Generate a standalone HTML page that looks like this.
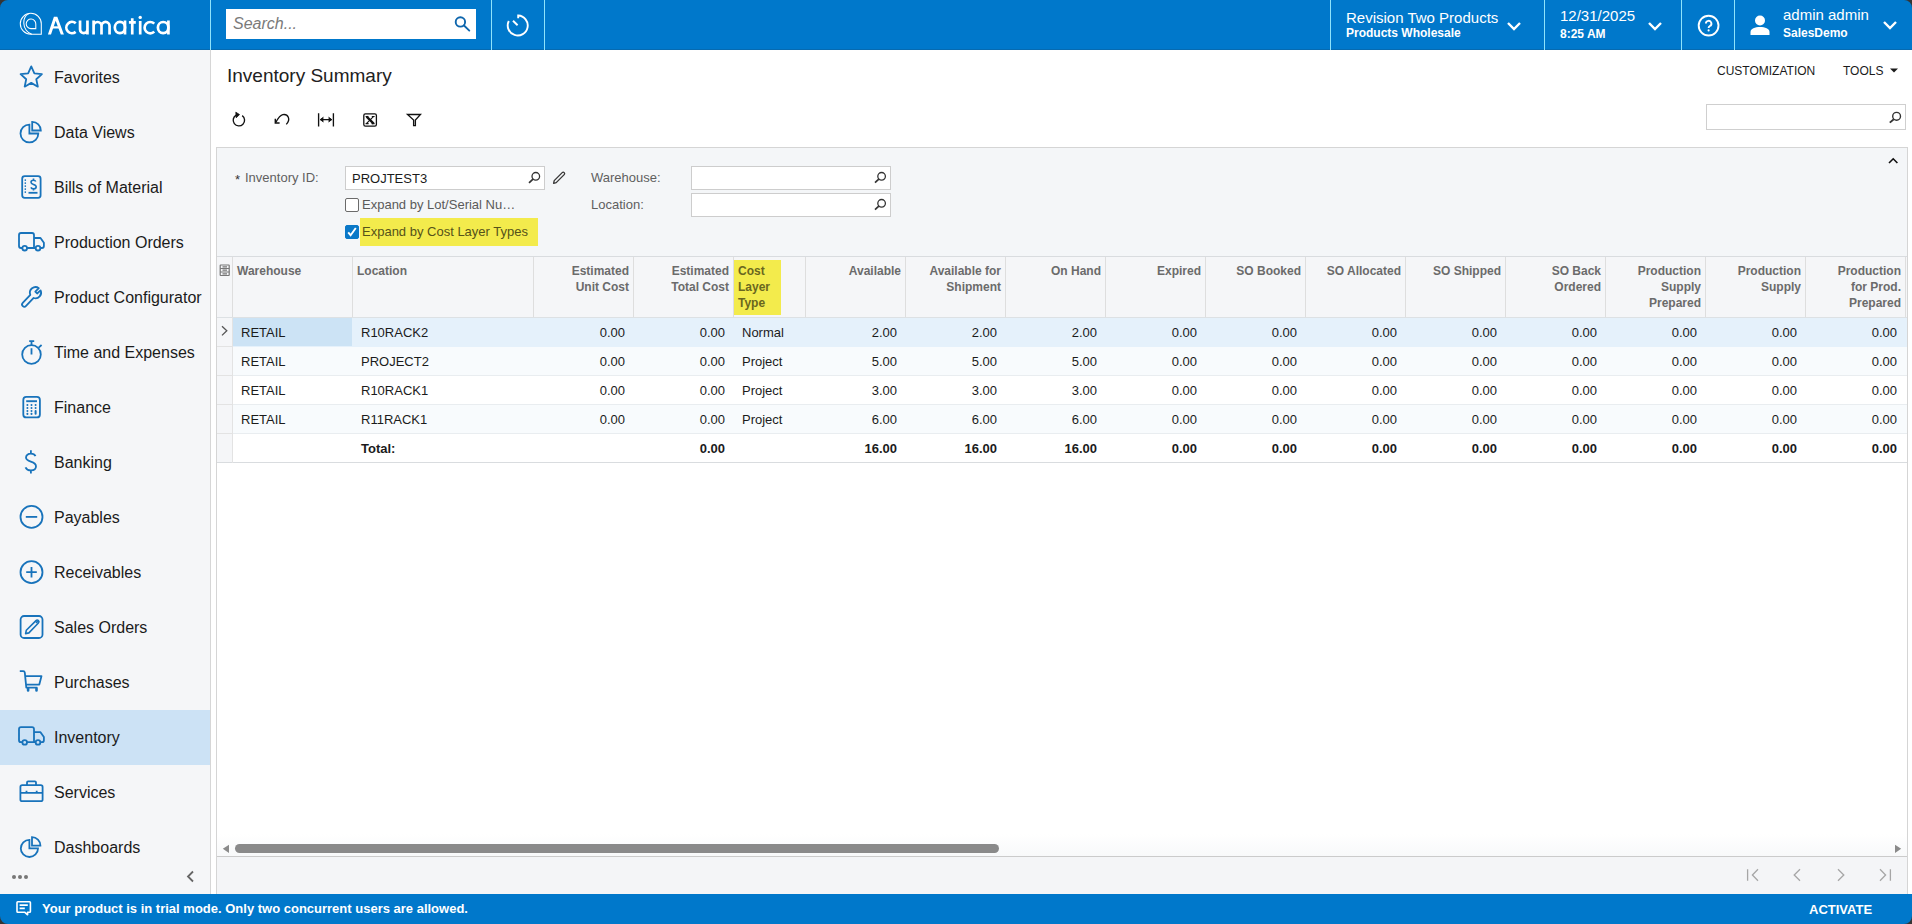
<!DOCTYPE html>
<html><head><meta charset="utf-8">
<style>
*{box-sizing:border-box;margin:0;padding:0}
html,body{width:1912px;height:924px;overflow:hidden;background:#fff;font-family:"Liberation Sans",sans-serif;color:#1b1b1b}
.abs{position:absolute}
#hdr{position:absolute;left:0;top:0;width:1912px;height:50px;background:#0078cb}
.vdiv{position:absolute;top:0;width:1px;height:50px;background:#8fe3fb}
.wt{color:#fff;position:absolute;white-space:nowrap}
#side{position:absolute;left:0;top:50px;width:210px;height:844px;background:#f5f6f8}
#sideb{position:absolute;left:210px;top:50px;width:1px;height:844px;background:#d6d6d6}
.nav{position:absolute;left:0;width:210px;height:55px}
.nav .ic{position:absolute;left:19px;top:15px;width:25px;height:25px}
.nav .tx{position:absolute;left:54px;top:19px;font-size:16px;line-height:18px;color:#1b1b1b;white-space:nowrap}
.nav.sel{background:#cce2f5}
#foot{position:absolute;left:0;top:894px;width:1912px;height:30px;background:#0078cb}
.lbl{font-size:13px;line-height:15px;color:#5f5f5f;white-space:nowrap}
.inp{background:#fff;border:1px solid #cdcdcd}
.cb{width:14px;height:14px;border:1px solid #6b6b6b;border-radius:2px;background:#fff}
.cb.on{background:#0a78c8;border-color:#0a78c8}
.cb.on svg{position:absolute;left:-1px;top:-1px}
.hd{font-size:12px;line-height:14px;font-weight:bold;color:#6b6b6b;white-space:nowrap}
.cell{font-size:13px;line-height:15px;color:#1b1b1b;white-space:nowrap}
.cell.b{font-weight:bold}
</style></head><body>
<div id="hdr">
  <div class="abs" style="left:0;top:49px;width:1912px;height:1px;background:#066ab0"></div>
  <div class="vdiv" style="left:210px"></div>
  <div class="vdiv" style="left:491px"></div>
  <div class="vdiv" style="left:544px"></div>
  <div class="vdiv" style="left:1330px"></div>
  <div class="vdiv" style="left:1544px"></div>
  <div class="vdiv" style="left:1681px"></div>
  <div class="vdiv" style="left:1734px"></div>

  <!-- logo -->
  <svg class="abs" style="left:0;top:0" width="50" height="50" viewBox="0 0 50 50" fill="none" stroke="#fff" stroke-width="1.05">
    <path d="M41.3 34.3V23.8A10.5 10.5 0 1 0 30.8 34.3Z"/>
    <path d="M28.8 13.6C25.2 15.3 23.6 19 23.8 23.2C24 28.6 27.4 33 31.8 34.3"/>
    <path d="M35.8 28.6V24A4.8 4.8 0 1 0 31 28.6Z"/>
  </svg>
  <svg class="abs" style="left:40px;top:10px" width="140" height="30" viewBox="40 10 140 30" fill="none" stroke="#fff" stroke-width="2.7">
    <path d="M75.78 23.35A5.65 5.65 0 1 0 75.63 31.88M80.05 20.6V29.4A3.7 3.7 0 0 0 87.45 29.4M87.45 20.6V34.4M93.6 34.4V20.6M93.6 25.95A3.95 3.95 0 0 1 101.5 25.95V34.4M101.5 25.95A4.02 4.02 0 0 1 109.55 25.95V34.4M125 20.6V34.4M132.25 18.2V34.4M128.9 22.35H135.8M140.2 21V34.4M154.25 23.65A5.65 5.65 0 1 0 154.25 31.65M168.4 20.6V34.4"/>
    <path d="M47.9 34.4L53.9 16.8H57.3L63.9 34.4H60.8L55.67 20.71L51 34.4Z" fill="#fff" stroke="none"/><rect x="52.6" y="26.3" width="7" height="2.2" fill="#fff" stroke="none"/>
    <ellipse cx="119.9" cy="27.55" rx="5.1" ry="5.6"/>
    <ellipse cx="163.15" cy="27.6" rx="5.25" ry="5.6"/>
    <circle cx="140.2" cy="17.4" r="1.7" fill="#fff" stroke="none"/>
  </svg>
  <!-- search -->
  <div class="abs" style="left:226px;top:9px;width:250px;height:30px;background:#fff"></div>
  <div class="abs" style="left:233px;top:14px;font-size:16px;line-height:20px;font-style:italic;color:#7a7a7a">Search...</div>
  <svg class="abs" style="left:450px;top:12px" width="24" height="24" viewBox="450 12 24 24" fill="none" stroke="#0e66ad" stroke-width="1.9">
    <circle cx="460.4" cy="21.9" r="4.7"/><path d="M464 25.5L469.3 30.6" stroke-linecap="round"/>
  </svg>
  <!-- history -->
  <svg class="abs" style="left:500px;top:8px" width="36" height="36" viewBox="500 8 36 36" fill="none" stroke="#fff" stroke-width="1.9">
    <path d="M508.8 21A10 10 0 1 0 518.2 15.5V18.3"/><path d="M513 20.8L517.6 25.3"/>
  </svg>
  <!-- branch -->
  <div class="wt" style="left:1346px;top:9px;font-size:15px;line-height:17px">Revision Two Products</div>
  <div class="wt" style="left:1346px;top:26px;font-size:12px;line-height:14px;font-weight:bold">Products Wholesale</div>
  <svg class="abs" style="left:1506px;top:20px" width="16" height="12" viewBox="0 0 16 12" fill="none" stroke="#fff" stroke-width="2.4"><path d="M2 3L8 9L14 3"/></svg>
  <!-- date -->
  <div class="wt" style="left:1560px;top:7px;font-size:15px;line-height:17px">12/31/2025</div>
  <div class="wt" style="left:1560px;top:27px;font-size:12px;line-height:14px;font-weight:bold">8:25 AM</div>
  <svg class="abs" style="left:1647px;top:20px" width="16" height="12" viewBox="0 0 16 12" fill="none" stroke="#fff" stroke-width="2.4"><path d="M2 3L8 9L14 3"/></svg>
  <!-- help -->
  <svg class="abs" style="left:1690px;top:8px" width="36" height="36" viewBox="1690 8 36 36" fill="none" stroke="#fff" stroke-width="1.9">
    <circle cx="1708.6" cy="25.6" r="9.9"/>
    <path d="M1705.9 23.6A2.75 2.75 0 1 1 1709.9 26C1709 26.5 1708.6 27 1708.6 28"/>
    <circle cx="1708.6" cy="30.4" r="1.05" fill="#fff" stroke="none"/>
  </svg>
  <!-- user -->
  <svg class="abs" style="left:1750px;top:15px" width="20" height="20" viewBox="0 0 20 20" fill="#fff">
    <circle cx="10" cy="5.5" r="5"/><path d="M0.5 20V17C0.5 13.5 5 12 10 12S19.5 13.5 19.5 17V20Z"/>
  </svg>
  <div class="wt" style="left:1783px;top:6px;font-size:15px;line-height:17px">admin admin</div>
  <div class="wt" style="left:1783px;top:26px;font-size:12px;line-height:14px;font-weight:bold">SalesDemo</div>
  <svg class="abs" style="left:1882px;top:19px" width="16" height="12" viewBox="0 0 16 12" fill="none" stroke="#fff" stroke-width="2.4"><path d="M2 3L8 9L14 3"/></svg>
</div>
<div id="side"></div>
<div class="nav" style="top:50px"><svg class="abs" style="left:0;top:0" width="50" height="55" viewBox="0 0 50 55" fill="none" stroke="#1873bb" stroke-width="1.8"><polygon points="31.25,16.40 34.37,23.31 41.90,24.14 36.29,29.24 37.83,36.66 31.25,32.90 24.67,36.66 26.21,29.24 20.60,24.14 28.13,23.31" stroke-linejoin="round"/></svg><div class="tx">Favorites</div></div>
<div class="nav" style="top:105px"><svg class="abs" style="left:0;top:0" width="50" height="55" viewBox="0 0 50 55" fill="none" stroke="#1873bb" stroke-width="1.8"><path d="M29.4 19.6A8.9 8.9 0 1 0 38.3 28.5H29.4Z"/><path d="M32.2 16.9A8.6 8.6 0 0 1 40.8 25.5H32.2Z"/></svg><div class="tx">Data Views</div></div>
<div class="nav" style="top:160px"><svg class="abs" style="left:0;top:0" width="50" height="55" viewBox="0 0 50 55" fill="none" stroke="#1873bb" stroke-width="1.8"><rect x="22.2" y="16.2" width="18.4" height="21.6" rx="2.5"/><path d="M25.3 20v0.1M25.3 23v0.1M25.3 26v0.1M25.3 29v0.1M25.3 32v0.1" stroke-width="1.7" stroke-linecap="round"/><path d="M28.5 32.8H37.5"/><path d="M35.8 21.5C35.3 20.5 34.5 20.2 33.5 20.2C32 20.2 31 20.9 31 22.2C31 25 36.2 23.8 36.2 26.8C36.2 28.2 35 28.9 33.5 28.9C32.3 28.9 31.3 28.4 30.9 27.4M33.5 18.6V20.2M33.5 28.9V30.6" stroke-width="1.6"/></svg><div class="tx">Bills of Material</div></div>
<div class="nav" style="top:215px"><svg class="abs" style="left:0;top:0" width="50" height="55" viewBox="0 0 50 55" fill="none" stroke="#1873bb" stroke-width="1.8"><path d="M22.5 33H21Q19 33 19 31V20Q19 18 21 18H32Q34 18 34 20V33M27 33H35.8M34 23H40.5L43.9 27.8V31Q43.9 33 41.9 33H40.2" stroke-linejoin="round"/><circle cx="24.7" cy="33.2" r="2.3"/><circle cx="38" cy="33.2" r="2.3"/></svg><div class="tx">Production Orders</div></div>
<div class="nav" style="top:270px"><svg class="abs" style="left:0;top:0" width="50" height="55" viewBox="0 0 50 55" fill="none" stroke="#1873bb" stroke-width="1.8"><path d="M22.73 32.8L30.32 24.8A5.6 5.6 0 0 1 38.82 18.19L35.3 21.6L37.1 23.5L40.58 20.33A5.6 5.6 0 0 1 33.66 27.99L26.07 35.98A2.3 2.3 0 0 1 22.73 32.8Z" stroke-linejoin="round"/></svg><div class="tx">Product Configurator</div></div>
<div class="nav" style="top:325px"><svg class="abs" style="left:0;top:0" width="50" height="55" viewBox="0 0 50 55" fill="none" stroke="#1873bb" stroke-width="1.8"><circle cx="31.5" cy="29.5" r="9.3"/><path d="M31.5 23.2V29.6M31.5 16.5V20.2M29.2 16.2H34.2M38.6 22.6L41.6 20"/></svg><div class="tx">Time and Expenses</div></div>
<div class="nav" style="top:380px"><svg class="abs" style="left:0;top:0" width="50" height="55" viewBox="0 0 50 55" fill="none" stroke="#1873bb" stroke-width="1.8"><rect x="23.3" y="16.9" width="16.6" height="20.5" rx="3"/><path d="M26.2 21.2H37" stroke-width="1.9"/><path d="M27.4 24.9v.1M31.5 24.9v.1M35.6 24.9v.1M27.4 27.9v.1M31.5 27.9v.1M35.6 27.9v.1M27.4 30.9v.1M31.5 30.9v.1M35.6 30.9V33.8M27.4 33.8v.1M31.5 33.8v.1" stroke-width="2" stroke-linecap="round"/></svg><div class="tx">Finance</div></div>
<div class="nav" style="top:435px"><svg class="abs" style="left:0;top:0" width="50" height="55" viewBox="0 0 50 55" fill="none" stroke="#1873bb" stroke-width="1.8"><path d="M35.5 21.2C34.8 19.6 33.3 18.7 30.9 18.7C28.1 18.7 26 20 26 22.5C26 27.8 36 25.5 36 31.3C36 34 33.9 35.4 30.9 35.4C28.3 35.4 26.4 34.3 25.5 32.3M30.9 15.2V18.7M30.9 35.4V38.5" stroke-width="1.8"/></svg><div class="tx">Banking</div></div>
<div class="nav" style="top:490px"><svg class="abs" style="left:0;top:0" width="50" height="55" viewBox="0 0 50 55" fill="none" stroke="#1873bb" stroke-width="1.8"><circle cx="31.5" cy="26.9" r="11"/><path d="M25.8 26.9H37.2"/></svg><div class="tx">Payables</div></div>
<div class="nav" style="top:545px"><svg class="abs" style="left:0;top:0" width="50" height="55" viewBox="0 0 50 55" fill="none" stroke="#1873bb" stroke-width="1.8"><circle cx="31.5" cy="27.2" r="11"/><path d="M26.2 27.2H36.8M31.5 21.9V32.5"/></svg><div class="tx">Receivables</div></div>
<div class="nav" style="top:600px"><svg class="abs" style="left:0;top:0" width="50" height="55" viewBox="0 0 50 55" fill="none" stroke="#1873bb" stroke-width="1.8"><rect x="20.6" y="16" width="21.9" height="22" rx="3.5"/><path d="M25.6 33.6L26.3 30.3L36 20.6Q37.2 19.4 38.4 20.6Q39.6 21.8 38.4 23L28.9 32.9Z" stroke-linejoin="round" stroke-width="1.6"/><path d="M36.3 21.4L37.6 22.7" stroke-width="2.6"/></svg><div class="tx">Sales Orders</div></div>
<div class="nav" style="top:655px"><svg class="abs" style="left:0;top:0" width="50" height="55" viewBox="0 0 50 55" fill="none" stroke="#1873bb" stroke-width="1.8"><path d="M19.8 16.2H23.2Q24.6 16.2 24.8 17.6L26.3 32.7H37.3M25.2 21.1H41.5L39.3 29.6H26.1" stroke-linejoin="round"/><path d="M28.1 33.4V35.4M36.5 33.4V35.4" stroke-width="2.6" stroke-linecap="round"/></svg><div class="tx">Purchases</div></div>
<div class="nav sel" style="top:710px"><svg class="abs" style="left:0;top:0" width="50" height="55" viewBox="0 0 50 55" fill="none" stroke="#1873bb" stroke-width="1.8"><path d="M22.5 32.2H21Q19 32.2 19 30.2V19.2Q19 17.2 21 17.2H32Q34 17.2 34 19.2V32.2M27 32.2H35.8M34 22.2H40.5L43.9 27V30.2Q43.9 32.2 41.9 32.2H40.2" stroke-linejoin="round"/><circle cx="24.7" cy="32.4" r="2.3"/><circle cx="38" cy="32.4" r="2.3"/></svg><div class="tx">Inventory</div></div>
<div class="nav" style="top:765px"><svg class="abs" style="left:0;top:0" width="50" height="55" viewBox="0 0 50 55" fill="none" stroke="#1873bb" stroke-width="1.8"><rect x="20.4" y="20.2" width="22.2" height="16" rx="1.8"/><path d="M27 20.2V17.5C27 16.8 27.4 16.4 28.1 16.4H34.9C35.6 16.4 36 16.8 36 17.5V20.2M20.4 27.8H42.6M26.5 25.8V27.8M36.7 25.8V27.8"/></svg><div class="tx">Services</div></div>
<div class="nav" style="top:820px"><svg class="abs" style="left:0;top:0" width="50" height="55" viewBox="0 0 50 55" fill="none" stroke="#1873bb" stroke-width="1.8"><path d="M29.4 19.8A8.6 8.6 0 1 0 38 28.4H29.4Z"/><path d="M32 17.2A8.4 8.4 0 0 1 40.4 25.6H32Z"/></svg><div class="tx">Dashboards</div></div>
<div class="abs" style="left:12px;top:875px;width:4px;height:4px;border-radius:2px;background:#777"></div>
<div class="abs" style="left:18px;top:875px;width:4px;height:4px;border-radius:2px;background:#777"></div>
<div class="abs" style="left:24px;top:875px;width:4px;height:4px;border-radius:2px;background:#777"></div>
<svg class="abs" style="left:184px;top:869px" width="12" height="15" viewBox="0 0 12 15" fill="none" stroke="#666" stroke-width="1.8"><path d="M9 2.5L4 7.5L9 12.5"/></svg>

<div id="sideb"></div>

<!-- MAIN -->
<div class="abs" style="left:227px;top:65px;font-size:19px;line-height:22px;color:#212121;white-space:nowrap">Inventory Summary</div>
<div class="abs" style="left:1717px;top:64px;font-size:12px;line-height:14px;color:#1b1b1b;white-space:nowrap">CUSTOMIZATION</div>
<div class="abs" style="left:1843px;top:64px;font-size:12px;line-height:14px;color:#1b1b1b;white-space:nowrap">TOOLS</div>
<svg class="abs" style="left:1889px;top:67px" width="10" height="7" viewBox="0 0 10 7"><path d="M1 1.5H9L5 5.5Z" fill="#1b1b1b"/></svg>
<!-- toolbar icons -->
<svg class="abs" style="left:220px;top:100px" width="220" height="40" viewBox="220 100 220 40" fill="none" stroke="#111" stroke-width="1.35">
  <path d="M242.2 115.6A5.7 5.7 0 1 1 236.2 115.2"/>
  <path d="M235.8 112.2L239.5 114.6L236.2 117.8Z" fill="#111" stroke-width="0.8" stroke-linejoin="round"/>
  <path d="M286.3 124.4C288.5 122 289.3 119.5 288.3 117.3C287.3 115 285 114.2 282.8 114.6C280.6 115 279 116.5 275.8 122.3"/>
  <path d="M275.3 118.8V123H279.6" stroke-width="1.4"/>
  <path d="M318.6 113.2V126.6M333.4 113.2V126.6M320.5 119.6H331.5"/>
  <path d="M323.4 117.2L320.2 119.6L323.4 122M328.6 117.2L331.8 119.6L328.6 122" fill="#111" stroke-width="0.9"/>
  <rect x="363.8" y="113.8" width="12.6" height="12.4" rx="1.6" stroke-width="1.3"/>
  <path d="M366.6 116.6L373.6 123.6" stroke-width="2.3"/>
  <path d="M373.4 116.6L366.6 123.4" stroke-width="1.1"/>
  <path d="M365.6 116.5H368.4M371.8 116.5H374.6M365.6 123.6H368.6M371.6 123.6H374.6" stroke-width="1.1"/>
  <path d="M407.5 114.5H420.5L415.4 120V125.6H413.6V120Z" stroke-width="1.3" stroke-linejoin="miter"/>
</svg>
<!-- grid search -->
<div class="abs" style="left:1706px;top:104px;width:200px;height:26px;background:#fff;border:1px solid #cfcfcf"></div>
<svg class="abs" style="left:1886px;top:108px" width="18" height="18" viewBox="1886 108 18 18" fill="none" stroke="#333" stroke-width="1.4">
  <circle cx="1896.6" cy="116.3" r="3.9"/><path d="M1893.8 119.2L1889.8 122.6" stroke-width="1.8"/>
</svg>
<!-- content frame -->
<div class="abs" style="left:216px;top:147px;width:1692px;height:747px;border-left:1px solid #d5d5d5;border-right:1px solid #d5d5d5;border-top:1px solid #d5d5d5"></div>
<!-- form panel -->
<div class="abs" style="left:217px;top:148px;width:1690px;height:108px;background:#f4f6f8"></div>
<svg class="abs" style="left:1886px;top:154px" width="14" height="12" viewBox="0 0 14 12" fill="none" stroke="#111" stroke-width="1.6"><path d="M3 9L7.2 4.8L11.4 9"/></svg>
<div class="abs lbl" style="left:235px;top:172px;font-size:13px;line-height:15px;color:#333">*</div>
<div class="abs lbl" style="left:245px;top:170px">Inventory ID:</div>
<div class="abs inp" style="left:345px;top:166px;width:200px;height:24px"></div>
<div class="abs" style="left:352px;top:171px;font-size:13px;line-height:15px;color:#1b1b1b">PROJTEST3</div>
<svg class="abs" style="left:525px;top:168px" width="18" height="18" viewBox="525 168 18 18" fill="none" stroke="#333" stroke-width="1.3"><circle cx="535.8" cy="176.3" r="3.8"/><path d="M533 179.1L529 182.8" stroke-width="1.7"/></svg>
<svg class="abs" style="left:550px;top:168px" width="18" height="18" viewBox="550 168 18 18" fill="none" stroke="#333" stroke-width="1.3"><path d="M553.6 183.4L554.2 180.6L562.2 172.6C562.8 172 563.6 172 564.2 172.6C564.8 173.2 564.8 174 564.2 174.6L556.2 182.6Z" stroke-linejoin="round"/></svg>
<div class="abs cb" style="left:345px;top:198px"></div>
<div class="abs" style="left:362px;top:197px;font-size:13px;line-height:15px;color:#5a5a5a;white-space:nowrap">Expand by Lot/Serial Nu&hellip;</div>
<div class="abs" style="left:360px;top:218px;width:178px;height:28px;background:#f3eb4c"></div>
<div class="abs cb on" style="left:345px;top:225px"><svg width="14" height="14" viewBox="0 0 14 14" fill="none" stroke="#fff" stroke-width="1.9"><path d="M3.2 7.4L5.6 10.2L10.8 3"/></svg></div>
<div class="abs" style="left:362px;top:224px;font-size:13px;line-height:15px;color:#55521a;white-space:nowrap">Expand by Cost Layer Types</div>
<div class="abs lbl" style="left:591px;top:170px">Warehouse:</div>
<div class="abs lbl" style="left:591px;top:197px">Location:</div>
<div class="abs inp" style="left:691px;top:166px;width:200px;height:24px"></div>
<div class="abs inp" style="left:691px;top:193px;width:200px;height:24px"></div>
<svg class="abs" style="left:871px;top:168px" width="18" height="18" viewBox="871 168 18 18" fill="none" stroke="#333" stroke-width="1.3"><circle cx="881.6" cy="176.3" r="3.8"/><path d="M878.8 179.1L875 182.6" stroke-width="1.7"/></svg>
<svg class="abs" style="left:871px;top:195px" width="18" height="18" viewBox="871 195 18 18" fill="none" stroke="#333" stroke-width="1.3"><circle cx="881.6" cy="203.3" r="3.8"/><path d="M878.8 206.1L875 209.6" stroke-width="1.7"/></svg>
<!-- GRID -->
<div class="abs" style="left:217px;top:256px;width:1690px;height:62px;background:#f5f6f8;border-top:1px solid #d9dcdf;border-bottom:1px solid #dde1e4"></div>
<div class="abs" style="left:232px;top:318px;width:1675px;height:29px;background:#e5f1fb;border-bottom:1px solid #e5f1fb"></div>
<div class="abs" style="left:217px;top:318px;width:15px;height:29px;background:#f5f6f8;border-bottom:1px solid #e3e3e3"></div>
<div class="abs" style="left:232px;top:347px;width:1675px;height:29px;background:#f8fbfd;border-bottom:1px solid #e9edf0"></div>
<div class="abs" style="left:217px;top:347px;width:15px;height:29px;background:#f5f6f8;border-bottom:1px solid #e3e3e3"></div>
<div class="abs" style="left:232px;top:376px;width:1675px;height:29px;background:#ffffff;border-bottom:1px solid #e9edf0"></div>
<div class="abs" style="left:217px;top:376px;width:15px;height:29px;background:#f5f6f8;border-bottom:1px solid #e3e3e3"></div>
<div class="abs" style="left:232px;top:405px;width:1675px;height:29px;background:#f8fbfd;border-bottom:1px solid #e9edf0"></div>
<div class="abs" style="left:217px;top:405px;width:15px;height:29px;background:#f5f6f8;border-bottom:1px solid #e3e3e3"></div>
<div class="abs" style="left:232px;top:434px;width:1675px;height:29px;background:#ffffff;border-bottom:1px solid #d9dcdf"></div>
<div class="abs" style="left:217px;top:434px;width:15px;height:29px;background:#f5f6f8;border-bottom:1px solid #d9dcdf"></div>
<div class="abs" style="left:232px;top:318px;width:120px;height:28px;background:#cce3f5"></div>
<div class="abs" style="left:733px;top:260px;width:48px;height:55px;background:#f3eb4c"></div>
<div class="abs" style="left:232px;top:257px;width:1px;height:60px;background:#dedede"></div>
<div class="abs" style="left:352px;top:257px;width:1px;height:60px;background:#dedede"></div>
<div class="abs" style="left:533px;top:257px;width:1px;height:60px;background:#dedede"></div>
<div class="abs" style="left:633px;top:257px;width:1px;height:60px;background:#dedede"></div>
<div class="abs" style="left:733px;top:257px;width:1px;height:60px;background:#dedede"></div>
<div class="abs" style="left:805px;top:257px;width:1px;height:60px;background:#dedede"></div>
<div class="abs" style="left:905px;top:257px;width:1px;height:60px;background:#dedede"></div>
<div class="abs" style="left:1005px;top:257px;width:1px;height:60px;background:#dedede"></div>
<div class="abs" style="left:1105px;top:257px;width:1px;height:60px;background:#dedede"></div>
<div class="abs" style="left:1205px;top:257px;width:1px;height:60px;background:#dedede"></div>
<div class="abs" style="left:1305px;top:257px;width:1px;height:60px;background:#dedede"></div>
<div class="abs" style="left:1405px;top:257px;width:1px;height:60px;background:#dedede"></div>
<div class="abs" style="left:1505px;top:257px;width:1px;height:60px;background:#dedede"></div>
<div class="abs" style="left:1605px;top:257px;width:1px;height:60px;background:#dedede"></div>
<div class="abs" style="left:1705px;top:257px;width:1px;height:60px;background:#dedede"></div>
<div class="abs" style="left:1805px;top:257px;width:1px;height:60px;background:#dedede"></div>
<div class="abs" style="left:1905px;top:257px;width:1px;height:60px;background:#dedede"></div>
<div class="abs" style="left:232px;top:318px;width:1px;height:145px;background:#e3e3e3"></div>
<div class="abs hd" style="left:237px;top:264px;color:#6b6b6b">Warehouse</div>
<div class="abs hd" style="left:357px;top:264px;color:#6b6b6b">Location</div>
<div class="abs hd" style="left:533px;top:264px;width:96px;text-align:right">Estimated</div>
<div class="abs hd" style="left:533px;top:280px;width:96px;text-align:right">Unit Cost</div>
<div class="abs hd" style="left:633px;top:264px;width:96px;text-align:right">Estimated</div>
<div class="abs hd" style="left:633px;top:280px;width:96px;text-align:right">Total Cost</div>
<div class="abs hd" style="left:738px;top:264px;color:#6a671f">Cost</div>
<div class="abs hd" style="left:738px;top:280px;color:#6a671f">Layer</div>
<div class="abs hd" style="left:738px;top:296px;color:#6a671f">Type</div>
<div class="abs hd" style="left:805px;top:264px;width:96px;text-align:right">Available</div>
<div class="abs hd" style="left:905px;top:264px;width:96px;text-align:right">Available for</div>
<div class="abs hd" style="left:905px;top:280px;width:96px;text-align:right">Shipment</div>
<div class="abs hd" style="left:1005px;top:264px;width:96px;text-align:right">On Hand</div>
<div class="abs hd" style="left:1105px;top:264px;width:96px;text-align:right">Expired</div>
<div class="abs hd" style="left:1205px;top:264px;width:96px;text-align:right">SO Booked</div>
<div class="abs hd" style="left:1305px;top:264px;width:96px;text-align:right">SO Allocated</div>
<div class="abs hd" style="left:1405px;top:264px;width:96px;text-align:right">SO Shipped</div>
<div class="abs hd" style="left:1505px;top:264px;width:96px;text-align:right">SO Back</div>
<div class="abs hd" style="left:1505px;top:280px;width:96px;text-align:right">Ordered</div>
<div class="abs hd" style="left:1605px;top:264px;width:96px;text-align:right">Production</div>
<div class="abs hd" style="left:1605px;top:280px;width:96px;text-align:right">Supply</div>
<div class="abs hd" style="left:1605px;top:296px;width:96px;text-align:right">Prepared</div>
<div class="abs hd" style="left:1705px;top:264px;width:96px;text-align:right">Production</div>
<div class="abs hd" style="left:1705px;top:280px;width:96px;text-align:right">Supply</div>
<div class="abs hd" style="left:1805px;top:264px;width:96px;text-align:right">Production</div>
<div class="abs hd" style="left:1805px;top:280px;width:96px;text-align:right">for Prod.</div>
<div class="abs hd" style="left:1805px;top:296px;width:96px;text-align:right">Prepared</div>
<div class="abs cell" style="left:241px;top:325px">RETAIL</div>
<div class="abs cell" style="left:361px;top:325px">R10RACK2</div>
<div class="abs cell" style="left:533px;top:325px;width:92px;text-align:right">0.00</div>
<div class="abs cell" style="left:633px;top:325px;width:92px;text-align:right">0.00</div>
<div class="abs cell" style="left:742px;top:325px">Normal</div>
<div class="abs cell" style="left:805px;top:325px;width:92px;text-align:right">2.00</div>
<div class="abs cell" style="left:905px;top:325px;width:92px;text-align:right">2.00</div>
<div class="abs cell" style="left:1005px;top:325px;width:92px;text-align:right">2.00</div>
<div class="abs cell" style="left:1105px;top:325px;width:92px;text-align:right">0.00</div>
<div class="abs cell" style="left:1205px;top:325px;width:92px;text-align:right">0.00</div>
<div class="abs cell" style="left:1305px;top:325px;width:92px;text-align:right">0.00</div>
<div class="abs cell" style="left:1405px;top:325px;width:92px;text-align:right">0.00</div>
<div class="abs cell" style="left:1505px;top:325px;width:92px;text-align:right">0.00</div>
<div class="abs cell" style="left:1605px;top:325px;width:92px;text-align:right">0.00</div>
<div class="abs cell" style="left:1705px;top:325px;width:92px;text-align:right">0.00</div>
<div class="abs cell" style="left:1805px;top:325px;width:92px;text-align:right">0.00</div>
<div class="abs cell" style="left:241px;top:354px">RETAIL</div>
<div class="abs cell" style="left:361px;top:354px">PROJECT2</div>
<div class="abs cell" style="left:533px;top:354px;width:92px;text-align:right">0.00</div>
<div class="abs cell" style="left:633px;top:354px;width:92px;text-align:right">0.00</div>
<div class="abs cell" style="left:742px;top:354px">Project</div>
<div class="abs cell" style="left:805px;top:354px;width:92px;text-align:right">5.00</div>
<div class="abs cell" style="left:905px;top:354px;width:92px;text-align:right">5.00</div>
<div class="abs cell" style="left:1005px;top:354px;width:92px;text-align:right">5.00</div>
<div class="abs cell" style="left:1105px;top:354px;width:92px;text-align:right">0.00</div>
<div class="abs cell" style="left:1205px;top:354px;width:92px;text-align:right">0.00</div>
<div class="abs cell" style="left:1305px;top:354px;width:92px;text-align:right">0.00</div>
<div class="abs cell" style="left:1405px;top:354px;width:92px;text-align:right">0.00</div>
<div class="abs cell" style="left:1505px;top:354px;width:92px;text-align:right">0.00</div>
<div class="abs cell" style="left:1605px;top:354px;width:92px;text-align:right">0.00</div>
<div class="abs cell" style="left:1705px;top:354px;width:92px;text-align:right">0.00</div>
<div class="abs cell" style="left:1805px;top:354px;width:92px;text-align:right">0.00</div>
<div class="abs cell" style="left:241px;top:383px">RETAIL</div>
<div class="abs cell" style="left:361px;top:383px">R10RACK1</div>
<div class="abs cell" style="left:533px;top:383px;width:92px;text-align:right">0.00</div>
<div class="abs cell" style="left:633px;top:383px;width:92px;text-align:right">0.00</div>
<div class="abs cell" style="left:742px;top:383px">Project</div>
<div class="abs cell" style="left:805px;top:383px;width:92px;text-align:right">3.00</div>
<div class="abs cell" style="left:905px;top:383px;width:92px;text-align:right">3.00</div>
<div class="abs cell" style="left:1005px;top:383px;width:92px;text-align:right">3.00</div>
<div class="abs cell" style="left:1105px;top:383px;width:92px;text-align:right">0.00</div>
<div class="abs cell" style="left:1205px;top:383px;width:92px;text-align:right">0.00</div>
<div class="abs cell" style="left:1305px;top:383px;width:92px;text-align:right">0.00</div>
<div class="abs cell" style="left:1405px;top:383px;width:92px;text-align:right">0.00</div>
<div class="abs cell" style="left:1505px;top:383px;width:92px;text-align:right">0.00</div>
<div class="abs cell" style="left:1605px;top:383px;width:92px;text-align:right">0.00</div>
<div class="abs cell" style="left:1705px;top:383px;width:92px;text-align:right">0.00</div>
<div class="abs cell" style="left:1805px;top:383px;width:92px;text-align:right">0.00</div>
<div class="abs cell" style="left:241px;top:412px">RETAIL</div>
<div class="abs cell" style="left:361px;top:412px">R11RACK1</div>
<div class="abs cell" style="left:533px;top:412px;width:92px;text-align:right">0.00</div>
<div class="abs cell" style="left:633px;top:412px;width:92px;text-align:right">0.00</div>
<div class="abs cell" style="left:742px;top:412px">Project</div>
<div class="abs cell" style="left:805px;top:412px;width:92px;text-align:right">6.00</div>
<div class="abs cell" style="left:905px;top:412px;width:92px;text-align:right">6.00</div>
<div class="abs cell" style="left:1005px;top:412px;width:92px;text-align:right">6.00</div>
<div class="abs cell" style="left:1105px;top:412px;width:92px;text-align:right">0.00</div>
<div class="abs cell" style="left:1205px;top:412px;width:92px;text-align:right">0.00</div>
<div class="abs cell" style="left:1305px;top:412px;width:92px;text-align:right">0.00</div>
<div class="abs cell" style="left:1405px;top:412px;width:92px;text-align:right">0.00</div>
<div class="abs cell" style="left:1505px;top:412px;width:92px;text-align:right">0.00</div>
<div class="abs cell" style="left:1605px;top:412px;width:92px;text-align:right">0.00</div>
<div class="abs cell" style="left:1705px;top:412px;width:92px;text-align:right">0.00</div>
<div class="abs cell" style="left:1805px;top:412px;width:92px;text-align:right">0.00</div>
<div class="abs cell b" style="left:361px;top:441px">Total:</div>
<div class="abs cell b" style="left:633px;top:441px;width:92px;text-align:right">0.00</div>
<div class="abs cell b" style="left:805px;top:441px;width:92px;text-align:right">16.00</div>
<div class="abs cell b" style="left:905px;top:441px;width:92px;text-align:right">16.00</div>
<div class="abs cell b" style="left:1005px;top:441px;width:92px;text-align:right">16.00</div>
<div class="abs cell b" style="left:1105px;top:441px;width:92px;text-align:right">0.00</div>
<div class="abs cell b" style="left:1205px;top:441px;width:92px;text-align:right">0.00</div>
<div class="abs cell b" style="left:1305px;top:441px;width:92px;text-align:right">0.00</div>
<div class="abs cell b" style="left:1405px;top:441px;width:92px;text-align:right">0.00</div>
<div class="abs cell b" style="left:1505px;top:441px;width:92px;text-align:right">0.00</div>
<div class="abs cell b" style="left:1605px;top:441px;width:92px;text-align:right">0.00</div>
<div class="abs cell b" style="left:1705px;top:441px;width:92px;text-align:right">0.00</div>
<div class="abs cell b" style="left:1805px;top:441px;width:92px;text-align:right">0.00</div>
<svg class="abs" style="left:218px;top:262px" width="14" height="16" viewBox="218 262 14 16" fill="none" stroke="#777" stroke-width="1.2">
  <rect x="220.2" y="265" width="9" height="10.5" rx="0.5"/><path d="M220.2 268.5H229.2M220.2 272H229.2M222.5 266.8H227M222.5 270.2H227M222.5 273.8H227"/></svg>
<svg class="abs" style="left:218px;top:323px" width="14" height="16" viewBox="218 323 14 16" fill="none" stroke="#555" stroke-width="1.3"><path d="M222 326.3L226.8 330.8L222 335.4"/></svg>
<!-- SCROLL / PAGER -->
<div class="abs" style="left:217px;top:834px;width:1690px;height:22px;background:linear-gradient(#ffffff,#f8f9fa)"></div>
<svg class="abs" style="left:220px;top:842px" width="12" height="14" viewBox="220 842 12 14"><path d="M229 844.8V852.9L222.8 848.85Z" fill="#8a8a8a"/></svg>
<div class="abs" style="left:235px;top:844px;width:764px;height:9px;border-radius:4.5px;background:#8a8a8a"></div>
<svg class="abs" style="left:1892px;top:842px" width="12" height="14" viewBox="1892 842 12 14"><path d="M1895 844.8V852.9L1901.2 848.85Z" fill="#8a8a8a"/></svg>
<div class="abs" style="left:217px;top:856px;width:1690px;height:1px;background:#cbcbcb"></div>
<div class="abs" style="left:217px;top:857px;width:1690px;height:37px;background:#f4f5f7"></div>
<svg class="abs" style="left:1740px;top:862px" width="160" height="26" viewBox="1740 862 160 26" fill="none" stroke="#a6a6a6" stroke-width="1.3">
  <path d="M1747.6 869.3V880.8M1758 869.3L1752.4 875L1758 880.8"/>
  <path d="M1800 869.3L1794.2 875L1800 880.8"/>
  <path d="M1838 869.3L1843.8 875L1838 880.8"/>
  <path d="M1890.4 869.3V880.8M1880 869.3L1885.6 875L1880 880.8"/>
</svg>
<div id="foot">
<svg class="abs" style="left:0;top:0" width="40" height="30" viewBox="0 894 40 30" fill="none" stroke="#fff" stroke-width="1.6">
  <path d="M17.8 901.8H29.6Q30.4 901.8 30.4 902.6V911.4Q30.4 912.2 29.6 912.2H27.6V914.8L24.6 912.2H17.8Q17 912.2 17 911.4V902.6Q17 901.8 17.8 901.8Z" stroke-linejoin="round"/>
  <path d="M19.6 905.2H27.8M19.6 908.4H24.8" stroke-width="1.7"/>
</svg>
<div class="wt" style="left:42px;top:7px;font-size:13px;line-height:15px;font-weight:bold">Your product is in trial mode. Only two concurrent users are allowed.</div>
<div class="wt" style="left:1809px;top:8px;font-size:13px;line-height:15px;font-weight:bold">ACTIVATE</div>
</div>
<!-- window corners -->
<svg class="abs" style="left:0;top:0" width="8" height="8"><path d="M0 0H8A8 8 0 0 0 0 8Z" fill="#353535"/></svg>
<svg class="abs" style="left:1904px;top:0" width="8" height="8"><path d="M8 0H0A8 8 0 0 1 8 8Z" fill="#353535"/></svg>
<svg class="abs" style="left:0;top:916px" width="8" height="8"><path d="M0 8H8A8 8 0 0 1 0 0Z" fill="#353535"/></svg>
<svg class="abs" style="left:1904px;top:916px" width="8" height="8"><path d="M8 8H0A8 8 0 0 0 8 0Z" fill="#353535"/></svg>
</body></html>
